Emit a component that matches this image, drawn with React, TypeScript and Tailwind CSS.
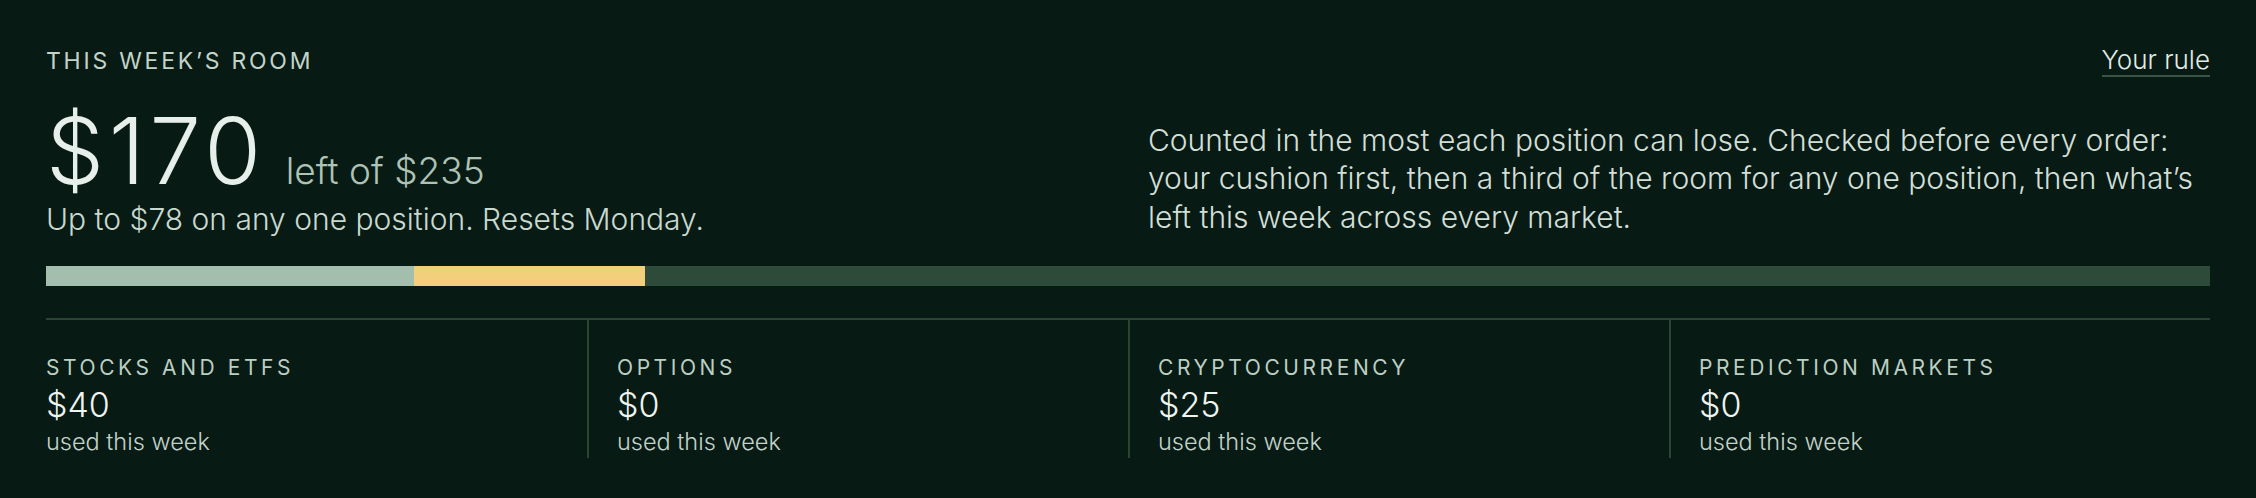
import React from 'react';

const TOTAL = 235;

const MARKETS = [
  { key: 'stocks', label: 'Stocks and ETFs', used: 40, bar: 'bg-[#a3bead]' },
  { key: 'options', label: 'Options', used: 0, bar: 'bg-[#8fb0c4]' },
  { key: 'crypto', label: 'Cryptocurrency', used: 25, bar: 'bg-[#f1cf7b]' },
  { key: 'prediction', label: 'Prediction markets', used: 0, bar: 'bg-[#c9a3d6]' },
];

export default function App() {
  const used = MARKETS.reduce((s, m) => s + m.used, 0);
  const left = TOTAL - used;

  return (
    <div className="min-h-[498px] w-full bg-[#071a14] px-[46px] pt-[45px] pb-[42px] font-['Inter','Liberation_Sans',sans-serif] text-[#d3e0d8]">
      <div className="flex items-baseline justify-between">
        <p className="text-[23px] leading-[32px] tracking-[0.12em] uppercase text-[#c2d4c9]">This week’s room</p>
        <a className="border-b-2 border-[#3a5344] text-[26px] leading-[30px] font-light text-[#e2ece6]">Your rule</a>
      </div>

      <div className="mt-7 grid grid-cols-2 items-end gap-10">
        <div>
          <div className="flex items-baseline gap-5">
            <span className="text-[92px] leading-none font-light tracking-[0.05em] text-[#e6efe9]">${left}</span>
            <span className="text-[37px] leading-none font-light text-[#aec3b6]">left of ${TOTAL}</span>
          </div>
          <p className="mt-[3px] text-[30px] leading-[39px] font-light text-[#c9d9cf]">Up to $78 on any one position. Resets Monday.</p>
        </div>
        <p className="mb-[3px] text-[30px] leading-[38.5px] font-light text-[#d2dfd7]">
          Counted in the most each position can lose. Checked before every order: your cushion first, then a third of the room for any one position, then what’s left this week across every market.
        </p>
      </div>

      <div className="mt-[27px] flex h-5 w-full bg-[#2e4a39]">
        {MARKETS.filter((m) => m.used > 0).map((m) => (
          <div key={m.key} className={`h-full ${m.bar}`} style={{ width: `${(m.used / TOTAL) * 100}%` }} />
        ))}
      </div>

      <div className="mt-8 grid grid-cols-4 border-t-2 border-[#2b4535]">
        {MARKETS.map((m, i) => (
          <div key={m.key} className={i === 0 ? 'pt-[34px]' : 'border-l-2 border-[#2b4535] pt-[34px] pl-7'}>
            <p className="text-[21px] leading-[28px] tracking-[0.17em] uppercase text-[#bccfc3]">{m.label}</p>
            <p className="mt-1 text-[34px] leading-[38px] font-light text-[#eef4f0]">${m.used}</p>
            <p className="mt-[2px] text-[23.5px] leading-[32px] font-light text-[#c2d2c8]">used this week</p>
          </div>
        ))}
      </div>
    </div>
  );
}
